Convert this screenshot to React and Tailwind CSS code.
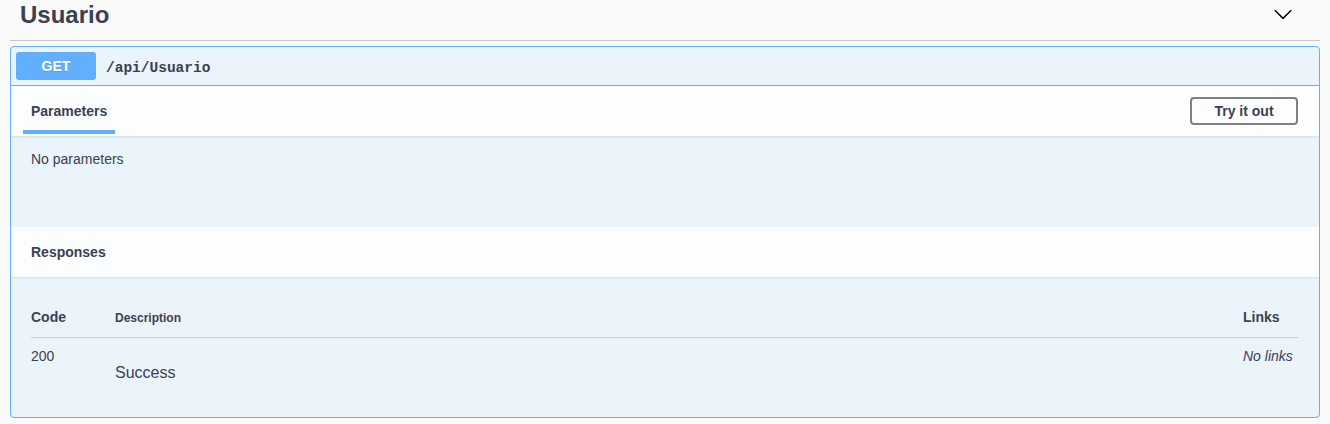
import React from "react";

// Flecha del encabezado del tag (estilo Swagger)
function Chevron() {
  return (
    <svg width="20" height="20" viewBox="0 0 20 20" className="mt-[4px]">
      <path
        fill="#000"
        d="M17.418 6.109c.272-.268.709-.268.979 0s.271.701 0 .969l-7.908 7.83c-.27.268-.707.268-.979 0l-7.908-7.83c-.27-.268-.27-.701 0-.969.271-.268.709-.268.979 0L10 13.25l7.418-7.141z"
      />
    </svg>
  );
}

export default function App() {
  return (
    <div className="min-h-screen bg-[#fafafa] px-[10px] text-[#3b4151] font-['Liberation_Sans',Arial,sans-serif]">
      {/* Encabezado del tag */}
      <div className="flex items-start justify-between h-[41px] pl-[10px] pr-[27px] border-b border-[#c4c6cb] mb-[5px]">
        <h3 className="text-[24px] leading-[30px] font-bold">Usuario</h3>
        <Chevron />
      </div>

      {/* Bloque de operación GET */}
      <div className="border border-[#61affe] rounded-[4px] bg-[#ebf3fb] overflow-hidden">
        {/* Resumen */}
        <div className="flex items-center h-[39px] px-[5px] border-b border-[#61affe]">
          <span className="w-[80px] h-[28px] flex items-center justify-center rounded-[3px] bg-[#61affe] text-white text-[14px] font-bold [text-shadow:0_1px_0_rgba(0,0,0,0.1)]">
            GET
          </span>
          <span className="px-[10px] mt-[5px] font-['Liberation_Mono',monospace] font-bold text-[14.5px]">
            /api/Usuario
          </span>
        </div>

        {/* Parámetros */}
        <div className="h-[50px] flex items-stretch justify-between pl-[12px] pr-[21px] bg-[#fcfdfe] shadow-[0_1px_2px_rgba(0,0,0,0.1)] relative">
          <div className="relative flex items-center px-[8px]">
            <span className="text-[14px] font-bold">Parameters</span>
            <span className="absolute left-0 right-0 bottom-[2px] h-[4px] bg-[#61affe]" />
          </div>
          <div className="flex items-center">
            <button className="w-[108px] h-[28px] border-2 border-[#808080] rounded-[4px] bg-transparent text-[14px] font-bold">
              Try it out
            </button>
          </div>
        </div>
        <div className="h-[91px] pt-[13px] pl-[20px]">
          <p className="text-[14px] leading-[20px]">No parameters</p>
        </div>

        {/* Respuestas */}
        <div className="h-[50px] flex items-center pl-[20px] bg-[#fcfdfe] shadow-[0_1px_2px_rgba(0,0,0,0.1)] relative">
          <h4 className="text-[14px] font-bold">Responses</h4>
        </div>
        <div className="pt-[21px] pb-[35px] pr-[21px] pl-[20px]">
          <div className="flex items-center h-[40px] border-b border-[#c8ccd3]">
            <span className="w-[84px] text-[14px] font-bold">Code</span>
            <span className="flex-1 text-[12px] font-bold">Description</span>
            <span className="w-[55px] text-[14px] font-bold">Links</span>
          </div>
          <div className="flex items-start pt-[10px]">
            <span className="w-[84px] text-[14px] leading-[17px]">200</span>
            <div className="flex-1">
              <p className="mt-[15px] text-[16px] leading-[19px]">Success</p>
            </div>
            <span className="w-[55px] text-[14px] leading-[17px] italic">No links</span>
          </div>
        </div>
      </div>
    </div>
  );
}
